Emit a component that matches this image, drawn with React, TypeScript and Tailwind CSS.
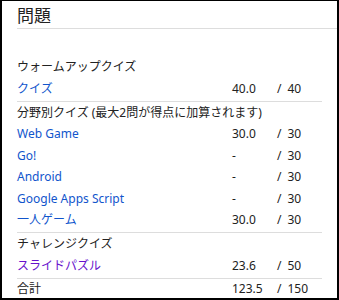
const sections = [
  {
    title: "ウォームアップクイズ",
    items: [{ name: "クイズ", score: "40.0", max: "40", visited: false }],
  },
  {
    title: "分野別クイズ (最大2問が得点に加算されます)",
    items: [
      { name: "Web Game", score: "30.0", max: "30", visited: false },
      { name: "Go!", score: "-", max: "30", visited: false },
      { name: "Android", score: "-", max: "30", visited: false },
      { name: "Google Apps Script", score: "-", max: "30", visited: false },
      { name: "一人ゲーム", score: "30.0", max: "30", visited: false },
    ],
  },
  {
    title: "チャレンジクイズ",
    items: [{ name: "スライドパズル", score: "23.6", max: "50", visited: true }],
  },
];

function Max({ value }: { value: string }) {
  return (
    <span className="flex">
      <span className="mr-[6px]">/</span>
      <span>{value}</span>
    </span>
  );
}

export default function App() {
  return (
    <div className="h-[300px] w-[339px] overflow-hidden border-t border-r-2 border-b-2 border-l-2 border-black bg-white font-['Noto_Sans','Noto_Sans_CJK_JP',sans-serif] text-[12px] text-[#222]">
      <div className="ml-[15px] border-b border-[#ddd] pt-[4px] pb-[1px]">
        <h1 className="text-[17px] leading-[22px] text-[#222]">問題</h1>
      </div>

      <div className="mt-[27px] mr-[15px] ml-[15px]">
        {sections.map((section, i) => (
          <div
            key={section.title}
            className={i === 0 ? "pb-[1px]" : "border-t border-[#ddd] pb-[1px]"}
          >
            <div className="h-[22px] leading-[22px]">{section.title}</div>
            {section.items.map((item) => (
              <div key={item.name} className="flex h-[21.5px] items-center">
                <a
                  href="#"
                  className={
                    item.visited
                      ? "w-[215px] text-[#6611cc]"
                      : "w-[215px] text-[#1155cc]"
                  }
                >
                  {item.name}
                </a>
                <span className="w-[45px]">{item.score}</span>
                <Max value={item.max} />
              </div>
            ))}
          </div>
        ))}
        <div className="flex h-[22px] items-center border-t border-[#ddd]">
          <span className="w-[215px]">合計</span>
          <span className="w-[45px]">123.5</span>
          <Max value="150" />
        </div>
      </div>
    </div>
  );
}
